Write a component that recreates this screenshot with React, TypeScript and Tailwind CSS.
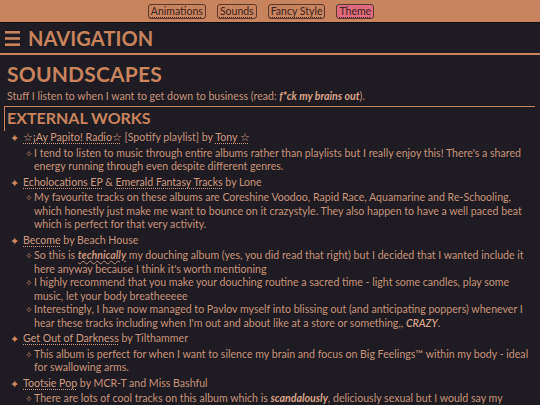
import React from "react";

const A = ({ children }: { children: React.ReactNode }) => (
  <a className="underline decoration-dotted decoration-1 underline-offset-2 text-[#cf9a80] cursor-pointer">{children}</a>
);

const Top = ({ children, subs }: { children: React.ReactNode; subs: React.ReactNode[] }) => (
  <li>
    <div className="flex">
      <span className="block w-[13px] h-[13.5px] shrink-0 text-[#d08a60] text-[11px] leading-[13.5px] overflow-visible">✦</span>
      <div className="min-w-0">{children}</div>
    </div>
    <ul className="ml-[15px] my-[2px]">
      {subs.map((s, i) => (
        <li key={i} className="flex">
          <span className="block w-[9px] h-[13.5px] shrink-0 text-[#c98a68] text-[9px] leading-[13.5px] overflow-visible">✧</span>
          <div className="min-w-0">{s}</div>
        </li>
      ))}
    </ul>
  </li>
);

const Btn = ({ label, active }: { label: string; active?: boolean }) => (
  <button
    className={
      "h-[15px] px-[2px] rounded-[3px] border border-[#5a382b] text-[10.5px] leading-[12px] text-[#3a2420] underline decoration-dotted decoration-1 underline-offset-2 " +
      (active ? "bg-[#e06a7e]" : "bg-transparent")
    }
  >
    {label}
  </button>
);

export default function App() {
  return (
    <div className="min-h-[405px] bg-[#1e1c22] font-['Lato',sans-serif] text-[#c6937c]">
      <div className="h-[22px] bg-[#c8835f] flex justify-center items-center gap-[11px] pr-[18px]">
        <Btn label="Animations" />
        <Btn label="Sounds" />
        <Btn label="Fancy Style" />
        <Btn label="Theme" active />
      </div>
      <div className="h-[33px] border-t border-[#0c0b0e] border-b-2 border-b-[#c8835f] bg-[#1e1c22] flex items-center pl-[5px]">
        <svg width="15" height="15" viewBox="0 0 15 15" className="mr-[8px] mt-[1px]">
          <rect x="0" y="0" width="15" height="2.6" fill="#c8835f" />
          <rect x="0" y="6.2" width="15" height="2.6" fill="#c8835f" />
          <rect x="0" y="12.4" width="15" height="2.6" fill="#c8835f" />
        </svg>
        <span className="text-[20px] font-bold leading-[24px] text-[#c8835f] tracking-[0.1px]">NAVIGATION</span>
      </div>
      <main className="pl-[4px] pr-[5px]">
        <h1 className="mt-[7px] pl-[3px] text-[21px] leading-[24px] font-bold text-[#c8835f] tracking-[0.2px]">SOUNDSCAPES</h1>
        <p className="mt-[4px] pl-[3px] text-[10.6px] leading-[13.5px]">
          Stuff I listen to when I want to get down to business (read: <b><i className="text-[#d9a48a]">f*ck my brains out</i></b>).
        </p>
        <h2 className="mt-[2.5px] border-t border-l border-[#c8835f] pl-[2px] text-[16px] leading-[22px] pb-[2px] font-bold text-[#c8835f]">
          EXTERNAL WORKS
        </h2>
        <ul className="ml-[6px] text-[10.6px] leading-[13.5px]">
          <Top
            subs={[
              <>I tend to listen to music through entire albums rather than playlists but I really enjoy this! There's a shared energy running through even despite different genres.</>,
            ]}
          >
            <A>☆¡Ay Papito! Radio☆</A> [Spotify playlist] by <A>Tony ☆</A>
          </Top>
          <Top
            subs={[
              <>My favourite tracks on these albums are Coreshine Voodoo, Rapid Race, Aquamarine and Re-Schooling, which honestly just make me want to bounce on it crazystyle. They also happen to have a well paced beat which is perfect for that very activity.</>,
            ]}
          >
            <A>Echolocations EP</A> &amp; <A>Emerald Fantasy Tracks</A> by Lone
          </Top>
          <Top
            subs={[
              <>So this is <b><i className="underline decoration-wavy decoration-1 underline-offset-1">technically</i></b> my douching album (yes, you did read that right) but I decided that I wanted include it here anyway because I think it's worth mentioning</>,
              <>I highly recommend that you make your douching routine a sacred time - light some candles, play some music, let your body breatheeeee</>,
              <>Interestingly, I have now managed to Pavlov myself into blissing out (and anticipating poppers) whenever I hear these tracks including when I'm out and about like at a store or something,, <i className="font-semibold text-[#d9a48a]">CRAZY</i>.</>,
            ]}
          >
            <A>Become</A> by Beach House
          </Top>
          <Top
            subs={[
              <>This album is perfect for when I want to silence my brain and focus on Big Feelings™ within my body - ideal for swallowing arms.</>,
            ]}
          >
            <A>Get Out of Darkness</A> by Tilthammer
          </Top>
          <Top
            subs={[
              <>There are lots of cool tracks on this album which is <b><i className="text-[#d9a48a]">scandalously</i></b>, deliciously sexual but I would say my favourites are the ones that make me feel the most sticky and sweet.</>,
            ]}
          >
            <A>Tootsie Pop</A> by MCR-T and Miss Bashful
          </Top>
        </ul>
      </main>
    </div>
  );
}
